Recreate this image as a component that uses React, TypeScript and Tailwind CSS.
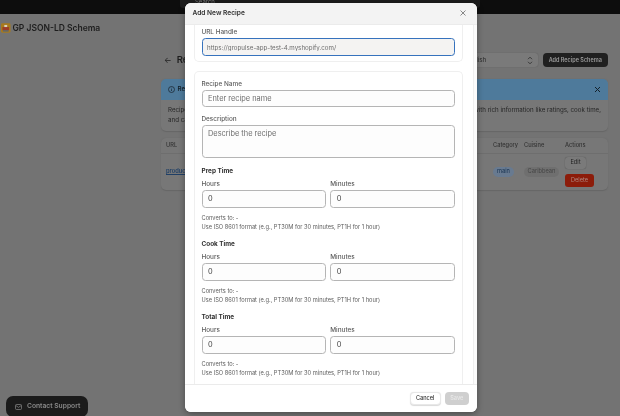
import React from "react";

function Field({ label, value, placeholder, className = "" }: { label: string; value?: string; placeholder?: string; className?: string }) {
  return (
    <div className={"flex-1 min-w-0 " + className}>
      <div className="h-[12px] leading-[12px] text-[6.4px] font-medium text-[#5c5c5c]">{label}</div>
      <input
        readOnly
        value={value ?? ""}
        placeholder={placeholder}
        className="block w-full h-[17.5px] rounded-[3.5px] border border-[#b5b5b5] bg-[#fdfdfd] px-[5.5px] text-[7.4px] text-[#404040] placeholder:text-[#6d6d6d] outline-none"
      />
    </div>
  );
}

function TimeBlock({ title, className = "" }: { title: string; className?: string }) {
  return (
    <div className={className}>
      <div className="h-[12px] leading-[12px] text-[6.4px] font-bold text-[#303030]">{title}</div>
      <div className="mt-[1.5px] flex gap-[4px]">
        <Field label="Hours" value="0" />
        <Field label="Minutes" value="0" />
      </div>
      <div className="mt-[5.5px] text-[5.7px] leading-[9px] text-[#5c5c5c]">
        <div>Converts to: -</div>
        <div>Use ISO 8601 format (e.g., PT30M for 30 minutes, PT1H for 1 hour)</div>
      </div>
    </div>
  );
}

export default function App() {
  return (
    <div
      className="relative h-[416px] w-[620px] overflow-hidden bg-[#737373] text-[#1c1c1c] blur-[0.4px]"
      style={{ fontFamily: "Inter, 'Liberation Sans', sans-serif" }}
    >
      {/* Background page */}
      <div className="flex h-[14px] items-start bg-[#0d0d0d] pl-[180px]">
        <div className="h-[8px] w-[300px] overflow-hidden rounded-b-[3px] bg-[#1c1c1c] pl-[15px] text-[6px] leading-[4px] text-[#777]">
          Search
        </div>
      </div>

      <div className="flex h-[28px] items-center gap-[2px] pl-[1px]">
        <svg className="shrink-0" width="9.5" height="10" viewBox="0 0 10 10">
          <rect width="10" height="10" rx="1.5" fill="#a87a1c" />
          <rect x="1.5" y="4" width="7" height="3.5" fill="#9c3c28" />
          <rect x="2" y="7.5" width="6" height="1.2" fill="#45658a" />
          <rect x="3.5" y="1.8" width="3" height="2.2" fill="#d8d0c0" />
        </svg>
        <span className="text-[8.5px] font-semibold text-[#1d1d1d]">GP JSON-LD Schema</span>
      </div>

      <div className="ml-[161px] mr-[12px] mt-[11px]">
        <div className="flex h-[14px] items-center">
          <span className="ml-[3px] text-[8px] text-[#222]">←</span>
          <span className="ml-[5px] text-[9.5px] font-semibold text-[#1d1d1d]">Recipe Schema</span>
          <div className="ml-auto flex h-[14px] w-[79px] items-center justify-between rounded-[3px] bg-[#7a7a7a] pr-[5px] text-[6.2px] text-[#2a2a2a] shadow-[0_0_1px_#555]">
            <span className="pl-[6px]">English</span>
            <svg width="6" height="9" viewBox="0 0 6 9" fill="none" stroke="#2a2a2a" strokeWidth="0.8">
              <path d="M1 3.2 3 1.2 5 3.2M1 5.8 3 7.8 5 5.8" />
            </svg>
          </div>
          <div className="ml-[4.5px] flex h-[13.5px] w-[65.5px] items-center justify-center rounded-[4px] bg-[#202020] text-[5.5px] font-semibold text-[#9c9c9c]">
            Add Recipe Schema
          </div>
        </div>

        <div className="mt-[11.5px] overflow-hidden rounded-[5px] bg-[#777777] shadow-[0_0.5px_1px_#666]">
          <div className="flex h-[21px] items-center bg-[#4e7a9b] pl-[7px] pr-[7px]">
            <svg width="7" height="7" viewBox="0 0 7 7" fill="none" stroke="#1d2a35" strokeWidth="0.8">
              <circle cx="3.5" cy="3.5" r="3" />
              <path d="M3.5 3.2v1.8M3.5 1.8v.6" />
            </svg>
            <span className="ml-[2.5px] text-[6.2px] font-semibold text-[#14212b]">Recipe Schema</span>
            <svg className="ml-auto" width="7" height="7" viewBox="0 0 7 7" stroke="#14212b" strokeWidth="1">
              <path d="M1 1 6 6M6 1 1 6" />
            </svg>
          </div>
          <div className="h-[31px] whitespace-nowrap px-[7px] pt-[5px] text-[6.2px] leading-[10px] text-[#262626]">
            Recipe schema helps your recipes stand out in Google search results and makes them eligible to appear with rich information like ratings, cook time,
            <br />
            and calories.
          </div>
        </div>

        <div className="mt-[7px] overflow-hidden rounded-[5px] bg-[#777777] shadow-[0_0.5px_1px_#666]">
          <div className="grid h-[16.5px] grid-cols-[327px_31px_41px_1fr] items-center border-b border-[#6e6e6e] pl-[5px] text-[5.7px] font-medium text-[#333]">
            <span>URL</span>
            <span className="whitespace-nowrap">Category</span>
            <span>Cuisine</span>
            <span>Actions</span>
          </div>
          <div className="grid h-[35.5px] grid-cols-[327px_31px_41px_1fr] items-center pl-[5px] text-[5.7px]">
            <span className="font-semibold text-[#1f3f66] underline">products/jerk-chicken</span>
            <span className="flex h-[9.5px] w-[21px] items-center justify-center rounded-full bg-[#687a90] text-[#15304f]">main</span>
            <span className="flex h-[9.5px] w-[35px] items-center justify-center rounded-full bg-[#6f6f6f] text-[#444]">Caribbean</span>
            <div className="flex flex-col items-start gap-[5px]">
              <span className="flex h-[12px] w-[21px] items-center justify-center rounded-[3px] bg-[#7a7a7a] text-[#222] shadow-[0_0_1px_#444]">Edit</span>
              <span className="flex h-[13px] w-[29px] items-center justify-center rounded-[3px] bg-[#8c1c0a] text-[#b08a84]">Delete</span>
            </div>
          </div>
        </div>
      </div>

      {/* Contact support button */}
      <div className="absolute bottom-[-1px] left-[6px] flex h-[21px] w-[82px] items-center gap-[5px] rounded-[7px] bg-[#1b1b1b] pl-[9px] text-[6.7px] font-semibold text-[#8a8a8a]">
        <svg width="7" height="6" viewBox="0 0 7 6" fill="none" stroke="#8a8a8a" strokeWidth="0.7">
          <rect x="0.5" y="0.5" width="6" height="5" rx="1" />
          <path d="M0.8 1.5 3.5 3.4 6.2 1.5" />
        </svg>
        Contact Support
      </div>

      {/* Modal */}
      <div className="absolute left-[184.5px] top-[2.5px] flex h-[409px] w-[292px] flex-col overflow-hidden rounded-[6px] bg-white shadow-[0_2px_6px_rgba(0,0,0,0.35)]">
        <div className="flex h-[22.5px] shrink-0 items-center justify-between border-b border-[#ebebeb] bg-[#f3f3f3] pl-[8px] pr-[11px]">
          <span className="mt-[1.5px] text-[6.6px] font-semibold text-[#303030]">Add New Recipe</span>
          <svg width="6" height="6" viewBox="0 0 6 6" stroke="#6b6b6b" strokeWidth="0.8">
            <path d="M0.5 0.5 5.5 5.5M5.5 0.5 0.5 5.5" />
          </svg>
        </div>

        <div className="flex min-h-0 flex-1">
          <div className="min-w-0 flex-1 overflow-hidden pl-[9.5px] pr-[10px]">
            <div className="h-[37px] rounded-b-[5px] border border-t-0 border-[#efefef] px-[6.5px] pt-[1px]">
              <div className="h-[12px] leading-[12px] text-[6.4px] font-medium text-[#5c5c5c]">URL Handle</div>
              <input
                readOnly
                value="https://gropulse-app-test-4.myshopify.com/"
                className="block h-[18px] w-full rounded-[3.5px] border-[1.5px] border-[#3672bd] bg-[#f4f3f2] px-[4.5px] text-[6.2px] text-[#6d6d6d] outline-none"
              />
            </div>
            <div className="mt-[9px] rounded-t-[5px] border border-b-0 border-[#efefef] px-[6.5px] pb-[20px] pt-[5.5px]">
              <Field label="Recipe Name" placeholder="Enter recipe name" />
              <div className="mt-[6px]">
                <div className="h-[12px] leading-[12px] text-[6.4px] font-medium text-[#5c5c5c]">Description</div>
                <textarea
                  readOnly
                  placeholder="Describe the recipe"
                  className="block h-[33px] w-full resize-none rounded-[3.5px] border border-[#b5b5b5] bg-[#fdfdfd] px-[5.5px] py-[2px] text-[7.4px] text-[#303030] placeholder:text-[#6d6d6d] outline-none"
                />
              </div>
              <TimeBlock title="Prep Time" className="mt-[6.5px]" />
              <TimeBlock title="Cook Time" className="mt-[6.5px]" />
              <TimeBlock title="Total Time" className="mt-[6.5px]" />
            </div>
          </div>
          <div className="w-[4px] shrink-0 border-l border-[#efefef] bg-[#fbfbfb]" />
        </div>

        <div className="flex h-[28px] shrink-0 items-center justify-end gap-[4px] border-t border-[#ebebeb] bg-white pr-[7.5px]">
          <span className="flex h-[13px] w-[30.5px] items-center justify-center rounded-[4px] border border-[#e8e8e8] bg-white text-[5.6px] font-medium text-[#303030] shadow-[0_0.5px_1px_rgba(0,0,0,0.15)]">
            Cancel
          </span>
          <span className="flex h-[13px] w-[24.5px] items-center justify-center rounded-[4px] bg-[#cfcfcf] text-[5.6px] font-semibold text-[#e6e6e6]">
            Save
          </span>
        </div>
      </div>
    </div>
  );
}
